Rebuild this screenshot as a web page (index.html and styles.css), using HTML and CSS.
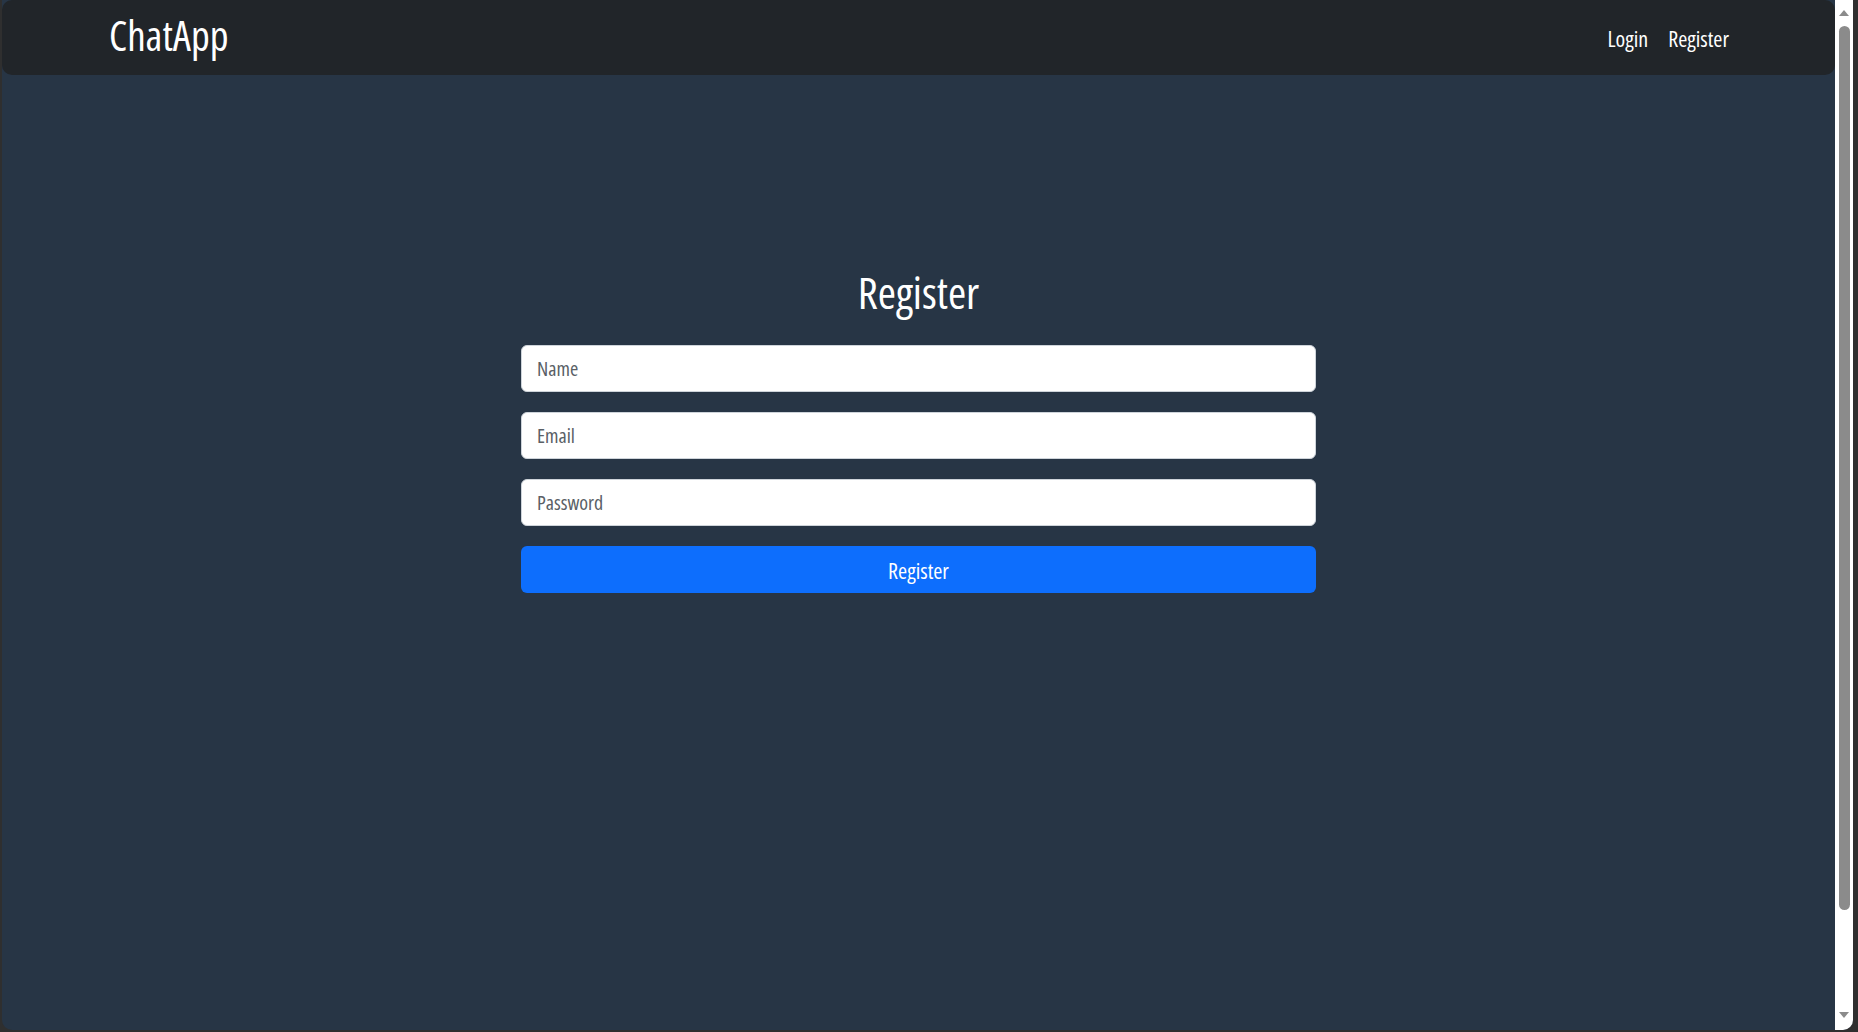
FILE: index.html
```html
<!DOCTYPE html>
<html lang="en">
<head>
<meta charset="utf-8">
<title>ChatApp</title>
<link rel="stylesheet" href="styles.css">
</head>
<body>
<div class="window">
  <div class="page">
    <nav class="navbar">
      <a class="brand" href="#">ChatApp</a>
      <div class="nav-links">
        <a class="nav-link" href="#">Login</a>
        <a class="nav-link" href="#">Register</a>
      </div>
    </nav>
    <main class="content">
      <h1 class="title">Register</h1>
      <form class="form">
        <input class="field" type="text" placeholder="Name">
        <input class="field" type="email" placeholder="Email">
        <input class="field" type="password" placeholder="Password">
        <button class="btn" type="button">Register</button>
      </form>
    </main>
  </div>
  <div class="scrollbar">
    <span class="arrow arrow-up"></span>
    <div class="scroll-track">
      <div class="scroll-thumb"></div>
    </div>
    <span class="arrow arrow-down"></span>
  </div>
</div>
</body>
</html>
```

FILE: styles.css
```css
* { box-sizing: border-box; }

html, body {
  margin: 0;
  height: 100%;
  overflow: hidden;
}

body {
  background: #2f2f2f;
  font-family: "Open Sans", "DejaVu Sans Condensed", sans-serif;
  font-stretch: 75%;
  font-weight: 500;
}

.window {
  height: 1030px;
  margin: 0 5px 2px 2px;
  background: #273545;
  border-radius: 0 0 10px 10px;
  overflow: hidden;
  display: flex;
}

.page {
  flex: 1;
  min-width: 0;
}

.scrollbar {
  width: 18px;
  background: #ffffff;
  display: flex;
  flex-direction: column;
  align-items: center;
  padding: 10px 0 12px;
}

.arrow {
  width: 0;
  height: 0;
  border-left: 5px solid transparent;
  border-right: 5px solid transparent;
}
.arrow-up { border-bottom: 6px solid #8b8b8b; }
.arrow-down { border-top: 6px solid #8b8b8b; }

.scroll-track {
  flex: 1;
  width: 100%;
  display: flex;
  justify-content: center;
  padding: 10px 0 0;
}

.scroll-thumb {
  width: 11px;
  height: 884px;
  background: #8b8b8b;
  border-radius: 6px;
}

.navbar {
  height: 75px;
  background: #212529;
  border-radius: 10px;
  display: flex;
  align-items: center;
  justify-content: space-between;
  padding: 0 106px 0 107px;
}

.brand {
  color: #ffffff;
  text-decoration: none;
  font-size: 41px;
  line-height: 1;
  margin-top: -5px;
}

.nav-links {
  display: flex;
  gap: 20px;
  margin-top: 1px;
}

.nav-link {
  color: #ffffff;
  text-decoration: none;
  font-size: 22px;
}

.content {
  width: 795px;
  margin: 0 auto;
  padding-top: 193px;
}

.title {
  margin: 0 0 29px;
  text-align: center;
  color: #ffffff;
  font-size: 44px;
  font-weight: 500;
  line-height: 48px;
}

.form {
  display: flex;
  flex-direction: column;
  gap: 20px;
}

.field {
  height: 47px;
  width: 100%;
  border: 1px solid #ced4da;
  border-radius: 6px;
  background: #ffffff;
  padding: 0 15px;
  font-family: inherit;
  font-stretch: 75%;
  font-weight: 500;
  font-size: 20px;
  color: #212529;
}

.field::placeholder {
  color: #5a5f66;
}

.btn {
  height: 47px;
  width: 100%;
  border: 0;
  border-radius: 6px;
  background: #0d6efd;
  color: #ffffff;
  font-family: inherit;
  font-stretch: 75%;
  font-weight: 500;
  font-size: 22px;
}
```
